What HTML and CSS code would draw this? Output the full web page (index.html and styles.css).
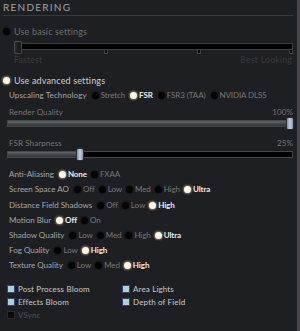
FILE: index.html
```html
<!DOCTYPE html>
<html>
<head>
<meta charset="utf-8">
<link rel="stylesheet" href="styles.css">
</head>
<body>
<div class="panel">
  <div class="title">RENDERING</div>

  <div class="mode dim"><span class="radio"></span><span>Use basic settings</span></div>
  <div class="basic">
    <div class="btrack"><span class="bhandle"></span></div>
    <div class="ticks"><span></span><span></span><span></span></div>
    <div class="ends"><span>Fastest</span><span>Best Looking</span></div>
  </div>

  <div class="mode adv"><span class="radio on"></span><span>Use advanced settings</span></div>

  <div class="row up"><span class="lbl">Upscaling Technology</span>
    <span class="opt"><span class="radio"></span>Stretch</span>
    <span class="opt sel"><span class="radio on"></span>FSR</span>
    <span class="opt"><span class="radio"></span>FSR3 (TAA)</span>
    <span class="opt"><span class="radio"></span>NVIDIA DLSS</span>
  </div>

  <div class="slabel"><span>Render Quality</span><span>100%</span></div>
  <div class="track"><div class="fill" style="width:100%"></div><span class="handle" style="left:calc(100% - 6px)"></span></div>

  <div class="slabel s2"><span>FSR Sharpness</span><span>25%</span></div>
  <div class="track"><div class="fill" style="width:25%"></div><span class="handle" style="left:calc(25% - 3px)"></span></div>

  <div class="opts">
    <div class="row"><span class="lbl">Anti-Aliasing</span>
      <span class="opt sel"><span class="radio on"></span>None</span>
      <span class="opt"><span class="radio"></span>FXAA</span>
    </div>
    <div class="row"><span class="lbl">Screen Space AO</span>
      <span class="opt"><span class="radio"></span>Off</span>
      <span class="opt"><span class="radio"></span>Low</span>
      <span class="opt"><span class="radio"></span>Med</span>
      <span class="opt"><span class="radio"></span>High</span>
      <span class="opt sel"><span class="radio on"></span>Ultra</span>
    </div>
    <div class="row"><span class="lbl">Distance Field Shadows</span>
      <span class="opt"><span class="radio"></span>Off</span>
      <span class="opt"><span class="radio"></span>Low</span>
      <span class="opt sel"><span class="radio on"></span>High</span>
    </div>
    <div class="row"><span class="lbl">Motion Blur</span>
      <span class="opt sel"><span class="radio on"></span>Off</span>
      <span class="opt"><span class="radio"></span>On</span>
    </div>
    <div class="row"><span class="lbl">Shadow Quality</span>
      <span class="opt"><span class="radio"></span>Low</span>
      <span class="opt"><span class="radio"></span>Med</span>
      <span class="opt"><span class="radio"></span>High</span>
      <span class="opt sel"><span class="radio on"></span>Ultra</span>
    </div>
    <div class="row"><span class="lbl">Fog Quality</span>
      <span class="opt"><span class="radio"></span>Low</span>
      <span class="opt sel"><span class="radio on"></span>High</span>
    </div>
    <div class="row"><span class="lbl">Texture Quality</span>
      <span class="opt"><span class="radio"></span>Low</span>
      <span class="opt"><span class="radio"></span>Med</span>
      <span class="opt sel"><span class="radio on"></span>High</span>
    </div>
  </div>

  <div class="checks">
    <div class="check"><span class="box on"></span>Post Process Bloom</div>
    <div class="check"><span class="box on"></span>Area Lights</div>
    <div class="check"><span class="box on"></span>Effects Bloom</div>
    <div class="check"><span class="box on"></span>Depth of Field</div>
    <div class="check off"><span class="box"></span>VSync</div>
  </div>
</div>
</body>
</html>
```

FILE: styles.css
```css
html, body {
  margin: 0;
  padding: 0;
  background: #1e1f22;
}
body {
  width: 300px;
  height: 331px;
  overflow: hidden;
  font-family: Lato, "Open Sans", sans-serif;
  font-size: 8px;
  letter-spacing: 0.1px;
  color: #8a8a8a;
}
.panel {
  width: 300px;
  height: 331px;
  box-sizing: border-box;
  border-right: 3px solid #47474a;
  padding: 1px 4px 0 3px;
}
.title {
  font-size: 10px;
  letter-spacing: 1.25px;
  color: #a2a2a2;
  line-height: 12px;
  height: 12px;
  padding-bottom: 2px;
  border-bottom: 1px solid #38393c;
}
.mode {
  display: flex;
  align-items: center;
  gap: 4px;
  height: 15px;
  line-height: 15px;
  margin-top: 8px;
  font-size: 9px;
  letter-spacing: 0.15px;
  color: #cfcfcf;
}
.mode.dim { color: #6e6e6e; }
.radio {
  display: inline-block;
  width: 7px;
  height: 7px;
  border-radius: 50%;
  background: #040404;
  box-shadow: 0 0 0 1px #18181a;
  flex: none;
}
.radio.on {
  background: #fff6e4;
  box-shadow: 0 0 2px 1px rgba(255, 230, 190, 0.45);
}
.basic {
  margin-left: 11px;
  margin-top: 4px;
}
.btrack {
  position: relative;
  height: 5px;
  background: #000;
  border: 1px solid #3e3f42;
}
.bhandle {
  position: absolute;
  left: -1px;
  top: -3px;
  width: 6px;
  height: 11px;
  background: linear-gradient(90deg, #2a2a2a, #141414);
  border: 1px solid #4a4a4a;
  border-radius: 1px;
}
.ticks {
  display: flex;
  justify-content: space-between;
  padding-left: calc(33% - 2px);
  height: 5px;
}
.ticks span {
  width: 2px;
  height: 3px;
  background: #050505;
  border: 1px solid #444;
  border-top: 0;
}
.ends {
  display: flex;
  justify-content: space-between;
  font-size: 8.5px;
  letter-spacing: 0.3px;
  color: #3a3b3d;
  line-height: 10px;
  height: 10px;
  padding-right: 1px;
}
.row {
  display: flex;
  align-items: center;
  height: 15.2px;
  line-height: 15px;
  padding-left: 6px;
  white-space: nowrap;
  letter-spacing: 0;
}
.row.up { letter-spacing: 0.1px; }
.lbl {
  color: #a8a8a8;
  margin-right: 5px;
}
.opt {
  display: flex;
  align-items: center;
  gap: 2px;
  margin-right: 4px;
  color: #777777;
  letter-spacing: -0.1px;
}
.row.up .opt { margin-right: 5px; }
.opt.sel {
  color: #ececec;
  font-weight: bold;
}
.slabel {
  display: flex;
  justify-content: space-between;
  padding-left: 6px;
  color: #767676;
  line-height: 12px;
  height: 12px;
  margin-top: 3px;
}
.slabel.s2 { margin-top: 10px; }
.track {
  position: relative;
  margin: 2px 0 0 4px;
  height: 5px;
  background: #000;
  border: 1px solid #46474a;
}
.fill {
  height: 100%;
  background: linear-gradient(#5c6466, #2e3436);
}
.handle {
  position: absolute;
  top: -4px;
  width: 6px;
  height: 11px;
  border-radius: 2px;
  background: linear-gradient(90deg, #7f90a0, #c6d2de, #8595a5);
  border: 1px solid #2a2e33;
}
.opts {
  margin-top: 9px;
}
.checks {
  display: grid;
  grid-template-columns: 115px 1fr;
  row-gap: 1px;
  margin-top: 9px;
  padding-left: 4px;
}
.check {
  display: flex;
  align-items: center;
  gap: 3px;
  height: 12px;
  line-height: 12px;
  color: #cccccc;
  letter-spacing: 0.15px;
}
.check.off { color: #505050; }
.box {
  width: 6px;
  height: 6px;
  background: #0a0a0a;
  border: 1px solid #2a2a2a;
  flex: none;
}
.box.on {
  background: #a9d4d6;
  border: 1px solid #3d3f72;
}
```
